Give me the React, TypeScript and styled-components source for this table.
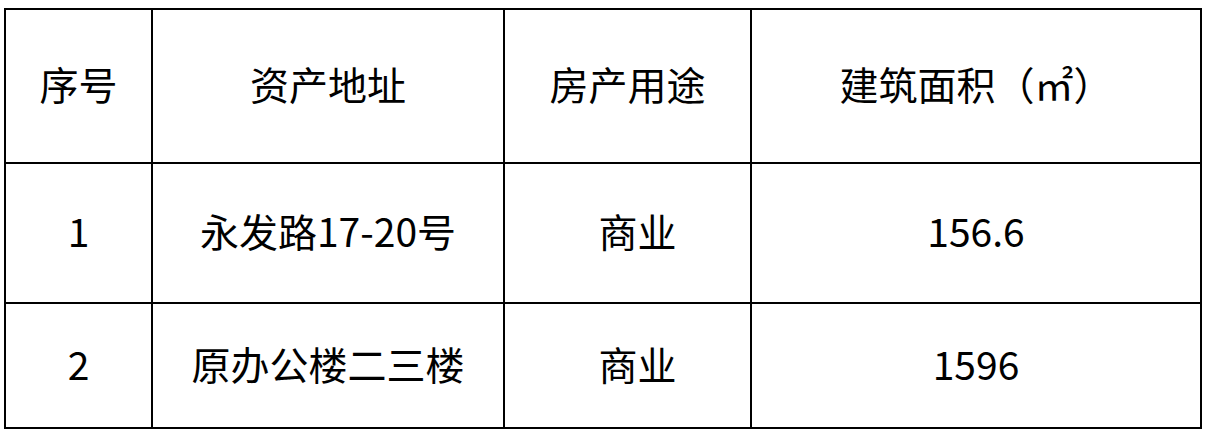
import React from "react";
import styled, { createGlobalStyle } from "styled-components";

const GlobalStyle = createGlobalStyle`
  html, body {
    margin: 0;
    padding: 0;
    background: #ffffff;
  }
  body {
    font-family: "Microsoft YaHei", "Noto Sans CJK SC", "Noto Sans", sans-serif;
    color: #000000;
  }
`;

const Page = styled.div`
  padding: 8px 0 0 4px;
`;

const Grid = styled.div`
  display: inline-grid;
  grid-template-columns: 145px 350px 245px 448px;
  grid-template-rows: 152px 138px 123px;
  gap: 2px;
  padding: 2px;
  background: #000000;
`;

const Cell = styled.div<{ $shift?: number }>`
  display: flex;
  align-items: center;
  justify-content: center;
  background: #ffffff;
  font-size: 39px;
  line-height: 1;
  white-space: nowrap;
  padding: 0 0 5px ${(p) => p.$shift ?? 0}px;
`;

const header = ["序号", "资产地址", "房产用途", "建筑面积（㎡）"];

const rows = [
  ["1", "永发路17-20号", "商业", "156.6"],
  ["2", "原办公楼二三楼", "商业", "1596"],
];

export default function App() {
  return (
    <>
      <GlobalStyle />
      <Page>
        <Grid>
          {header.map((h) => (
            <Cell key={h}>{h}</Cell>
          ))}
          {rows.map((r, i) =>
            r.map((v, j) => (
              <Cell key={`${i}-${j}`} $shift={j === 2 ? 20 : 0}>
                {v}
              </Cell>
            ))
          )}
        </Grid>
      </Page>
    </>
  );
}
